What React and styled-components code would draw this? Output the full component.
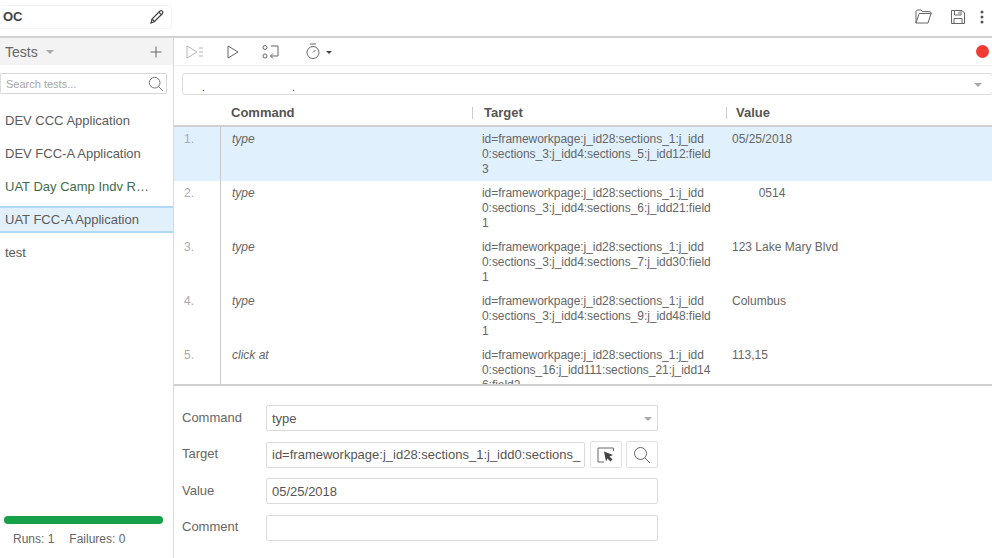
import React from "react";
import styled, { createGlobalStyle } from "styled-components";

const Global = createGlobalStyle`
  html, body { margin: 0; padding: 0; background: #fff; }
  body { font-family: "Liberation Sans", Arial, sans-serif; color: #555; overflow: hidden; }
  * { box-sizing: border-box; }
`;

const Page = styled.div`
  width: 992px; height: 558px; display: flex; flex-direction: column; overflow: hidden; background: #fff;
`;
const Header = styled.header`
  height: 38px; flex: none; display: flex; align-items: center; justify-content: space-between;
  border-bottom: 2px solid #d2d2d2; padding-bottom: 3px;
`;
const ProjectName = styled.div`
  width: 172px; height: 24px; display: flex; align-items: center; justify-content: space-between;
  border: 1px solid #f4f4f4; border-radius: 4px; border-left: 0; padding: 0 6px 0 3px;
  font-size: 13px; font-weight: 700; color: #444;
`;
const HeaderActions = styled.div`
  display: flex; align-items: center; margin-right: 8px;
`;
const IconSlot = styled.span`
  display: inline-flex; align-items: center; justify-content: center; flex: none;
  width: ${p => p.$w || 20}px; margin-left: ${p => p.$ml || 0}px;
`;
const Body = styled.div`
  flex: 1; display: flex; min-height: 0;
`;
const Sidebar = styled.aside`
  width: 174px; flex: none; display: flex; flex-direction: column; border-right: 1px solid #d9d9d9;
`;
const SideHead = styled.div`
  height: 27px; background: #f3f3f3; display: flex; align-items: center; padding: 0 11px 0 5px; font-size: 14px; color: #666; gap: 8px;
`;
const Caret = styled.span`
  width: 0; height: 0; border-left: ${p => p.$s || 4}px solid transparent; border-right: ${p => p.$s || 4}px solid transparent;
  border-top: ${p => p.$s || 4}px solid ${p => p.$c || "#aaa"};
  margin-top: ${p => p.$mt || 1}px;
`;
const Grow = styled.div`flex: 1;`;
const SearchBox = styled.div`
  margin: 8px 6px 0 0; height: 21px; border: 1px solid #d6d6d6; border-left-color: #ddd; border-radius: 2px; display: flex; align-items: center; justify-content: space-between;
  padding: 0 2px 0 5px; font-size: 11px; color: #a6a6a6; margin-left: 0; width: 167px;
`;
const SuiteList = styled.ul`
  list-style: none; margin: 9.6px 0 0; padding: 0; flex: 1;
`;
const Suite = styled.li`
  height: 33px; display: flex; align-items: center; padding: 0 5px; font-size: 13px; color: ${p => p.$green ? "#3e6d4e" : "#5a5a5a"};
  white-space: nowrap;
  ${p => p.$active && `background: #e2f0fc; border-top: 2px solid #b3d8f5; border-bottom: 2px solid #b3d8f5; height: 27px; margin: 3px 0;`}
`;
const Progress = styled.div`
  height: 8px; margin: 0 10px 0 4px; border-radius: 4px; background: #16a049;
`;
const Stats = styled.div`
  height: 34px; padding: 8px 0 0 13px; font-size: 12px; color: #666; display: flex; gap: 15px;
`;
const Main = styled.main`
  flex: 1; min-width: 0; display: flex; flex-direction: column;
`;
const Toolbar = styled.div`
  height: 28px; flex: none; display: flex; align-items: center; padding: 0 3px 0 12px; border-bottom: 1px solid #f0f0f0;
`;
const UrlBar = styled.div`
  margin: 7px 0 0 8px; width: 811px; height: 22px; flex: none; border: 1px solid #dcdcdc; border-radius: 3px; position: relative;
  display: flex; align-items: center; justify-content: flex-end; padding-right: 10px;
`;
const UrlDot = styled.span`
  position: absolute; left: ${p => p.$x}px; top: 9px; font-size: 10px; color: #444; line-height: 10px;
`;
const TableHead = styled.div`
  margin-top: 5px; height: 27px; flex: none; display: grid; grid-template-columns: 47px 251px 254px 1fr; align-items: center;
  border-bottom: 2px solid #d0d0d0; font-size: 13px; font-weight: 700; color: #555;
`;
const HeadCell = styled.div`
  padding-left: ${p => p.$pl || 10}px; height: 12px; line-height: 12px; ${p => p.$sep && "border-left: 1px solid #ccc;"}
  display: flex; align-items: center;
`;
const Rows = styled.div`
  height: 259px; flex: none; overflow: hidden; border-bottom: 2px solid #d0d0d0;
`;
const Row = styled.div`
  height: 54px; display: grid; grid-template-columns: 47px 251px 250px 1fr; font-size: 12px; line-height: 15px;
  background: ${p => p.$active ? "#e0f0fd" : "#fff"};
`;
const IndexCell = styled.div`
  padding: 5px 0 0 10px; color: #aaa; border-right: 1px solid #c8c8c8;
`;
const CommandCell = styled.div`
  padding: 5px 0 0 11px; font-style: italic; color: #666;
`;
const TargetCell = styled.div`
  padding: 5px 0 0 10px; color: #666; white-space: pre-line; letter-spacing: -0.05px;
`;
const ValueCell = styled.div`
  padding: 5px 0 0 10px; color: #666; white-space: pre;
`;
const Form = styled.div`
  padding: 19px 0 0 8px; display: flex; flex-direction: column; gap: 10.5px;
`;
const FormRow = styled.div`
  display: flex; align-items: center; height: 26px;
`;
const Label = styled.label`
  width: 84px; font-size: 13px; color: #666; flex: none; margin-top: -2px;
`;
const Field = styled.div`
  height: 26px; width: ${p => p.$w || 392}px; flex: none; border: 1px solid #dadada; border-radius: 2px; font-size: 13px; color: #555;
  display: flex; align-items: center; justify-content: space-between; padding: 0 5px; white-space: nowrap; overflow: hidden;
`;
const SquareButton = styled.div`
  width: 32px; height: 27px; margin-left: ${p => p.$ml}px; border: 1px solid #e0e0e0; border-radius: 2px; display: flex; align-items: center; justify-content: center; flex: none;
`;
const Record = styled.span`
  width: 13px; height: 13px; border-radius: 50%; background: #ef3b33; flex: none;
`;

const S = { fill: "none", stroke: "#666", strokeWidth: 1 };

const Pencil = () => (
  <svg width="16" height="16" viewBox="0 0 16 16" {...S} stroke="#444" strokeWidth="1.2">
    <path d="M2 14l1-4 8-8c.6-.6 1.6-.5 2.3.2s.8 1.7.2 2.3l-8 8z" />
    <path d="M9.8 3.2l3 3M3 10l3 3" />
  </svg>
);
const Folder = () => (
  <svg width="17" height="15" viewBox="0 0 17 15" {...S}>
    <path d="M1 14V2.500l1.200-1.500h4l1.300 1.600h7.500l1 .9V5" />
    <path d="M1 14h12l3-9.500H4.200L1 14z" />
  </svg>
);
const Save = () => (
  <svg width="16" height="16" viewBox="0 0 16 16" {...S}>
    <path d="M1.500 1.500h10.500l2.500 2.500v10.500h-13z" />
    <path d="M4.500 1.500v4.500h6.500v-4.500M9 2.500v2.500M4 14.500v-5h8v5" />
  </svg>
);
const Kebab = () => (
  <svg width="4" height="14" viewBox="0 0 4 14" fill="#555">
    <circle cx="2" cy="2" r="1.500" /><circle cx="2" cy="7" r="1.500" /><circle cx="2" cy="12" r="1.500" />
  </svg>
);
const Plus = () => (
  <svg width="12" height="12" viewBox="0 0 12 12" {...S}><path d="M6 .5v11M.5 6h11" /></svg>
);
const Magnifier = ({ size = 18 }) => (
  <svg width={size} height={size} viewBox="0 0 18 18" {...S}>
    <circle cx="7.500" cy="7.500" r="6" /><path d="M12 12l5 5" />
  </svg>
);
const RunAll = () => (
  <svg width="18" height="14" viewBox="0 0 18 14" {...S} stroke="#b5b5b5">
    <path d="M1 1v12l10-6z" /><path d="M13 3h4M13 7h4M13 11h4" strokeWidth="1.200" />
  </svg>
);
const Run = () => (
  <svg width="12" height="14" viewBox="0 0 12 14" {...S}><path d="M1 1v12l10-6z" /></svg>
);
const Step = () => (
  <svg width="17" height="16" viewBox="0 0 17 16" {...S}>
    <circle cx="3" cy="3.500" r="2" /><circle cx="3" cy="12" r="2" />
    <path d="M9 2h7v10H8.500M11 9.500L8.500 12l2.500 2.500" />
  </svg>
);
const Timer = () => (
  <svg width="14" height="17" viewBox="0 0 14 17" {...S}>
    <path d="M4 1h6" /><circle cx="7" cy="9.500" r="6" /><path d="M7 9.500l2.500-2.500" />
  </svg>
);
const Picker = () => (
  <svg width="18" height="18" viewBox="0 0 18 18" {...S}>
    <path d="M1 2h15.500v3M1 2v14h6" />
    <path d="M7 5.500l9 3.500-3.500 1.500 3 3-2 2-3-3-1.500 3z" fill="#444" stroke="none" />
  </svg>
);

const line1 = "id=frameworkpage:j_id28:sections_1:j_idd";
const rows = [
  { c: "type", t: `${line1}\n0:sections_3:j_idd4:sections_5:j_idd12:field\n3`, v: "05/25/2018", active: true },
  { c: "type", t: `${line1}\n0:sections_3:j_idd4:sections_6:j_idd21:field\n1`, v: "        0514" },
  { c: "type", t: `${line1}\n0:sections_3:j_idd4:sections_7:j_idd30:field\n1`, v: "123 Lake Mary Blvd" },
  { c: "type", t: `${line1}\n0:sections_3:j_idd4:sections_9:j_idd48:field\n1`, v: "Columbus" },
  { c: "click at", t: `${line1}\n0:sections_16:j_idd111:sections_21:j_idd14\n6:field2`, v: "113,15" },
];

export default function App() {
  return (
    <Page>
      <Global />
      <Header>
        <ProjectName>OC <Pencil /></ProjectName>
        <HeaderActions>
          <IconSlot $w={17}><Folder /></IconSlot>
          <IconSlot $w={16} $ml={18}><Save /></IconSlot>
          <IconSlot $w={4} $ml={14}><Kebab /></IconSlot>
        </HeaderActions>
      </Header>
      <Body>
        <Sidebar>
          <SideHead>Tests <Caret /><Grow /><Plus /></SideHead>
          <SearchBox>Search tests...<Magnifier size={16} /></SearchBox>
          <SuiteList>
            <Suite>DEV CCC Application</Suite>
            <Suite>DEV FCC-A Application</Suite>
            <Suite $green>UAT Day Camp Indv R…</Suite>
            <Suite $active>UAT FCC-A Application</Suite>
            <Suite>test</Suite>
          </SuiteList>
          <Progress />
          <Stats><span>Runs: 1</span><span>Failures: 0</span></Stats>
        </Sidebar>
        <Main>
          <Toolbar>
            <IconSlot $w={18}><RunAll /></IconSlot>
            <IconSlot $w={12} $ml={23}><Run /></IconSlot>
            <IconSlot $w={17} $ml={23}><Step /></IconSlot>
            <IconSlot $w={14} $ml={27}><Timer /></IconSlot>
            <IconSlot $w={6} $ml={6}><Caret $c="#444" $s={3} /></IconSlot>
            <Grow />
            <Record />
          </Toolbar>
          <UrlBar>
            <UrlDot $x={19}>.</UrlDot>
            <UrlDot $x={109}>.</UrlDot>
            <Caret $c="#aaa" />
          </UrlBar>
          <TableHead>
            <HeadCell />
            <HeadCell $pl={10}>Command</HeadCell>
            <HeadCell $sep $pl={11}>Target</HeadCell>
            <HeadCell $sep $pl={9}>Value</HeadCell>
          </TableHead>
          <Rows>
            {rows.map((r, i) => (
              <Row key={i} $active={r.active}>
                <IndexCell>{i + 1}.</IndexCell>
                <CommandCell>{r.c}</CommandCell>
                <TargetCell>{r.t}</TargetCell>
                <ValueCell>{r.v}</ValueCell>
              </Row>
            ))}
          </Rows>
          <Form>
            <FormRow>
              <Label>Command</Label>
              <Field>type <Caret $c="#aaa" /></Field>
            </FormRow>
            <FormRow>
              <Label>Target</Label>
              <Field $w={319}>id=frameworkpage:j_id28:sections_1:j_idd0:sections_</Field>
              <SquareButton $ml={5}><Picker /></SquareButton>
              <SquareButton $ml={4}><Magnifier /></SquareButton>
            </FormRow>
            <FormRow>
              <Label>Value</Label>
              <Field>05/25/2018</Field>
            </FormRow>
            <FormRow>
              <Label>Comment</Label>
              <Field />
            </FormRow>
          </Form>
        </Main>
      </Body>
    </Page>
  );
}
